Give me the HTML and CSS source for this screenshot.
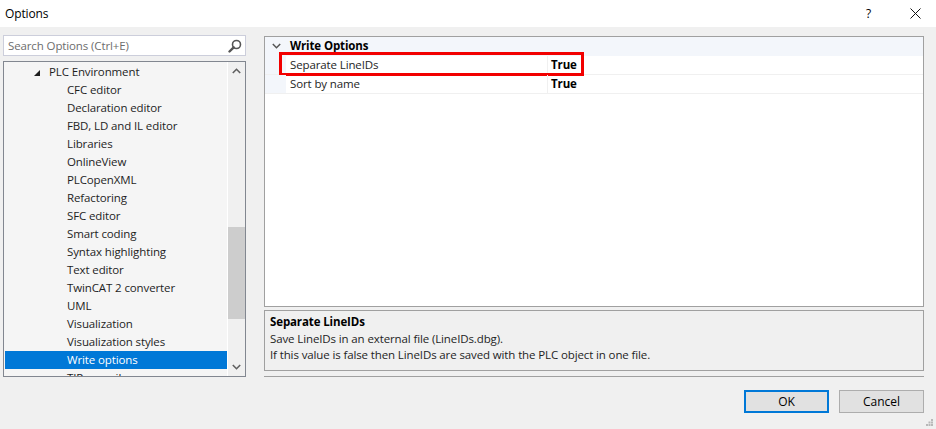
FILE: index.html
```html
<!DOCTYPE html>
<html>
<head>
<meta charset="utf-8">
<link rel="stylesheet" href="styles.css">
</head>
<body>
<div class="window">
  <div class="titlebar">
    <span class="title">Options</span>
    <span class="tb-help">?</span>
    <span class="tb-close"><svg width="11" height="11" viewBox="0 0 11 11"><path d="M0.5 0.5 L10.5 10.5 M10.5 0.5 L0.5 10.5" stroke="#111" stroke-width="1" fill="none"/></svg></span>
  </div>
  <div class="main">
    <div class="leftcol">
      <div class="search">
        <span class="search-ph">Search Options (Ctrl+E)</span>
        <svg class="search-ico" width="14" height="14" viewBox="0 0 14 14"><circle cx="8.5" cy="5.5" r="4" stroke="#555" stroke-width="1.6" fill="none"/><path d="M5.7 8.3 L1.5 12.5" stroke="#555" stroke-width="2.4" stroke-linecap="round"/></svg>
      </div>
      <div class="tree">
        <div class="tree-items">
          <div class="item root"><svg class="tri" width="6" height="6" viewBox="0 0 6 6"><polygon points="6,0 6,6 0,6" fill="#1e1e1e"/></svg>PLC Environment</div>
          <div class="item child">CFC editor</div>
          <div class="item child">Declaration editor</div>
          <div class="item child">FBD, LD and IL editor</div>
          <div class="item child">Libraries</div>
          <div class="item child">OnlineView</div>
          <div class="item child">PLCopenXML</div>
          <div class="item child">Refactoring</div>
          <div class="item child">SFC editor</div>
          <div class="item child">Smart coding</div>
          <div class="item child">Syntax highlighting</div>
          <div class="item child">Text editor</div>
          <div class="item child">TwinCAT 2 converter</div>
          <div class="item child">UML</div>
          <div class="item child">Visualization</div>
          <div class="item child">Visualization styles</div>
          <div class="item child selected">Write options</div>
          <div class="item child">TIP compiler</div>
        </div>
        <div class="vscroll">
          <svg class="arrow" width="9" height="6" viewBox="0 0 9 6"><path d="M0.8 5 L4.5 1.3 L8.2 5" stroke="#606060" stroke-width="1.6" fill="none"/></svg>
          <div class="track"><div class="thumb"></div></div>
          <svg class="arrow" width="9" height="6" viewBox="0 0 9 6"><path d="M0.8 1 L4.5 4.7 L8.2 1" stroke="#606060" stroke-width="1.6" fill="none"/></svg>
        </div>
      </div>
    </div>
    <div class="rightcol">
      <div class="grid">
        <div class="cat">
          <span class="gutter"><svg width="9" height="6" viewBox="0 0 9 6"><path d="M0.8 1 L4.5 4.7 L8.2 1" stroke="#555" stroke-width="1.5" fill="none"/></svg></span>
          <span class="cat-name">Write Options</span>
        </div>
        <div class="prow">
          <span class="gutter"></span>
          <span class="pname">Separate LineIDs</span>
          <span class="pval">True</span>
          <div class="highlight"></div>
        </div>
        <div class="prow">
          <span class="gutter"></span>
          <span class="pname">Sort by name</span>
          <span class="pval">True</span>
        </div>
      </div>
      <div class="desc">
        <div class="desc-title">Separate LineIDs</div>
        <div class="desc-line">Save LineIDs in an external file (LineIDs.dbg).</div>
        <div class="desc-line">If this value is false then LineIDs are saved with the PLC object in one file.</div>
      </div>
      <div class="sep"></div>
    </div>
  </div>
  <div class="buttons">
    <button class="btn default">OK</button>
    <button class="btn">Cancel</button>
  </div>
  <svg class="grip" width="7" height="7" viewBox="0 0 7 7"><g fill="#b8b8b8"><rect x="5" y="0" width="2" height="2"/><rect x="2.5" y="2.5" width="2" height="2"/><rect x="5" y="2.5" width="2" height="2"/><rect x="0" y="5" width="2" height="2"/><rect x="2.5" y="5" width="2" height="2"/><rect x="5" y="5" width="2" height="2"/></g></svg>
</div>
</body>
</html>
```

FILE: styles.css
```css
html, body {
  margin: 0;
  padding: 0;
}
body {
  width: 936px;
  height: 429px;
  overflow: hidden;
  background: #f0f0f0;
  font-family: "Open Sans", "Noto Sans", sans-serif;
  font-size: 11.5px;
  letter-spacing: -0.12px;
  color: #1e1e1e;
}
.window {
  position: relative;
  width: 936px;
  height: 429px;
}
.titlebar {
  height: 27px;
  background: #ffffff;
  display: flex;
  align-items: center;
  padding-left: 5px;
}
.title {
  flex: 1;
  color: #000;
  font-size: 12px;
}
.tb-help {
  width: 40px;
  color: #000;
  margin-right: 4px;
  font-size: 12px;
}
.tb-close {
  width: 26px;
  display: flex;
  align-items: center;
}
.main {
  display: flex;
  padding-left: 3px;
  padding-top: 8px;
  gap: 18px;
}
.leftcol {
  width: 243px;
  display: flex;
  flex-direction: column;
  gap: 5px;
}
.search {
  height: 19px;
  border: 1px solid #cccedb;
  background: #fff;
  display: flex;
  align-items: center;
  padding-left: 4px;
  padding-right: 3px;
}
.search-ph {
  flex: 1;
  color: #6d6d6d;
}
.tree {
  height: 314px;
  border: 1px solid #828790;
  background: #f5f5f5;
  display: flex;
  overflow: hidden;
}
.tree-items {
  flex: 1;
  padding-top: 1px;
  padding-left: 1px;
  overflow: hidden;
}
.item {
  height: 18px;
  line-height: 18px;
  white-space: nowrap;
  display: flex;
  align-items: center;
}
.item.root {
  padding-left: 29px;
}
.tri {
  margin-right: 9px;
  margin-top: 1px;
}
.item.child {
  padding-left: 62px;
}
.item.selected {
  background: #0078d7;
  color: #fff;
}
.vscroll {
  width: 17px;
  background: #f0f0f0;
  border-left: 1px solid #fff;
  display: flex;
  flex-direction: column;
  align-items: center;
}
.vscroll .arrow {
  margin: 6px 0;
}
.track {
  flex: 1;
  width: 100%;
  padding-top: 147px;
}
.thumb {
  height: 92px;
  background: #cdcdcd;
}
.rightcol {
  width: 660px;
  margin-top: 1px;
  display: flex;
  flex-direction: column;
}
.grid {
  position: relative;
  height: 269px;
  border: 1px solid #a0a0a0;
  background: #fff;
}
.cat, .prow {
  display: flex;
  height: 18px;
  line-height: 18px;
  border-bottom: 1px solid #f0f0f0;
  position: relative;
}
.cat {
  background: #f3f6fb;
  border-bottom-color: #f3f6fb;
}
.gutter {
  width: 21px;
  flex: none;
  background: #f3f6fb;
  display: flex;
  align-items: center;
  justify-content: center;
  padding-left: 2px;
  box-sizing: border-box;
}
.cat-name {
  font-weight: bold;
  padding-left: 4px;
  color: #000;
}
.pname {
  width: 262px;
  box-sizing: border-box;
  padding-left: 4px;
  border-right: 1px solid #f0f0f0;
  flex: none;
}
.pval {
  font-weight: bold;
  padding-left: 3px;
  color: #000;
}
.highlight {
  position: absolute;
  left: 14px;
  top: -4px;
  width: 299px;
  height: 18px;
  border: 3px solid #f20000;
}
.desc {
  margin-top: 3px;
  height: 57px;
  border: 1px solid #a0a0a0;
  padding: 2px 5px 0;
}
.desc-title {
  font-weight: bold;
  height: 18px;
  line-height: 18px;
  color: #000;
}
.desc-line {
  height: 16px;
  line-height: 16px;
}
.sep {
  margin-top: 5px;
  height: 1px;
  background: #a0a0a0;
}
.buttons {
  position: absolute;
  left: 744px;
  top: 390px;
  display: flex;
  gap: 10px;
}
.btn {
  width: 85px;
  height: 23px;
  background: #e1e1e1;
  border: 1px solid #adadad;
  font-family: inherit;
  font-size: 12px;
  color: #000;
  padding: 0;
  margin: 0;
}
.btn.default {
  border: 2px solid #0078d7;
}
.grip {
  position: absolute;
  right: 3px;
  bottom: 3px;
}
```
